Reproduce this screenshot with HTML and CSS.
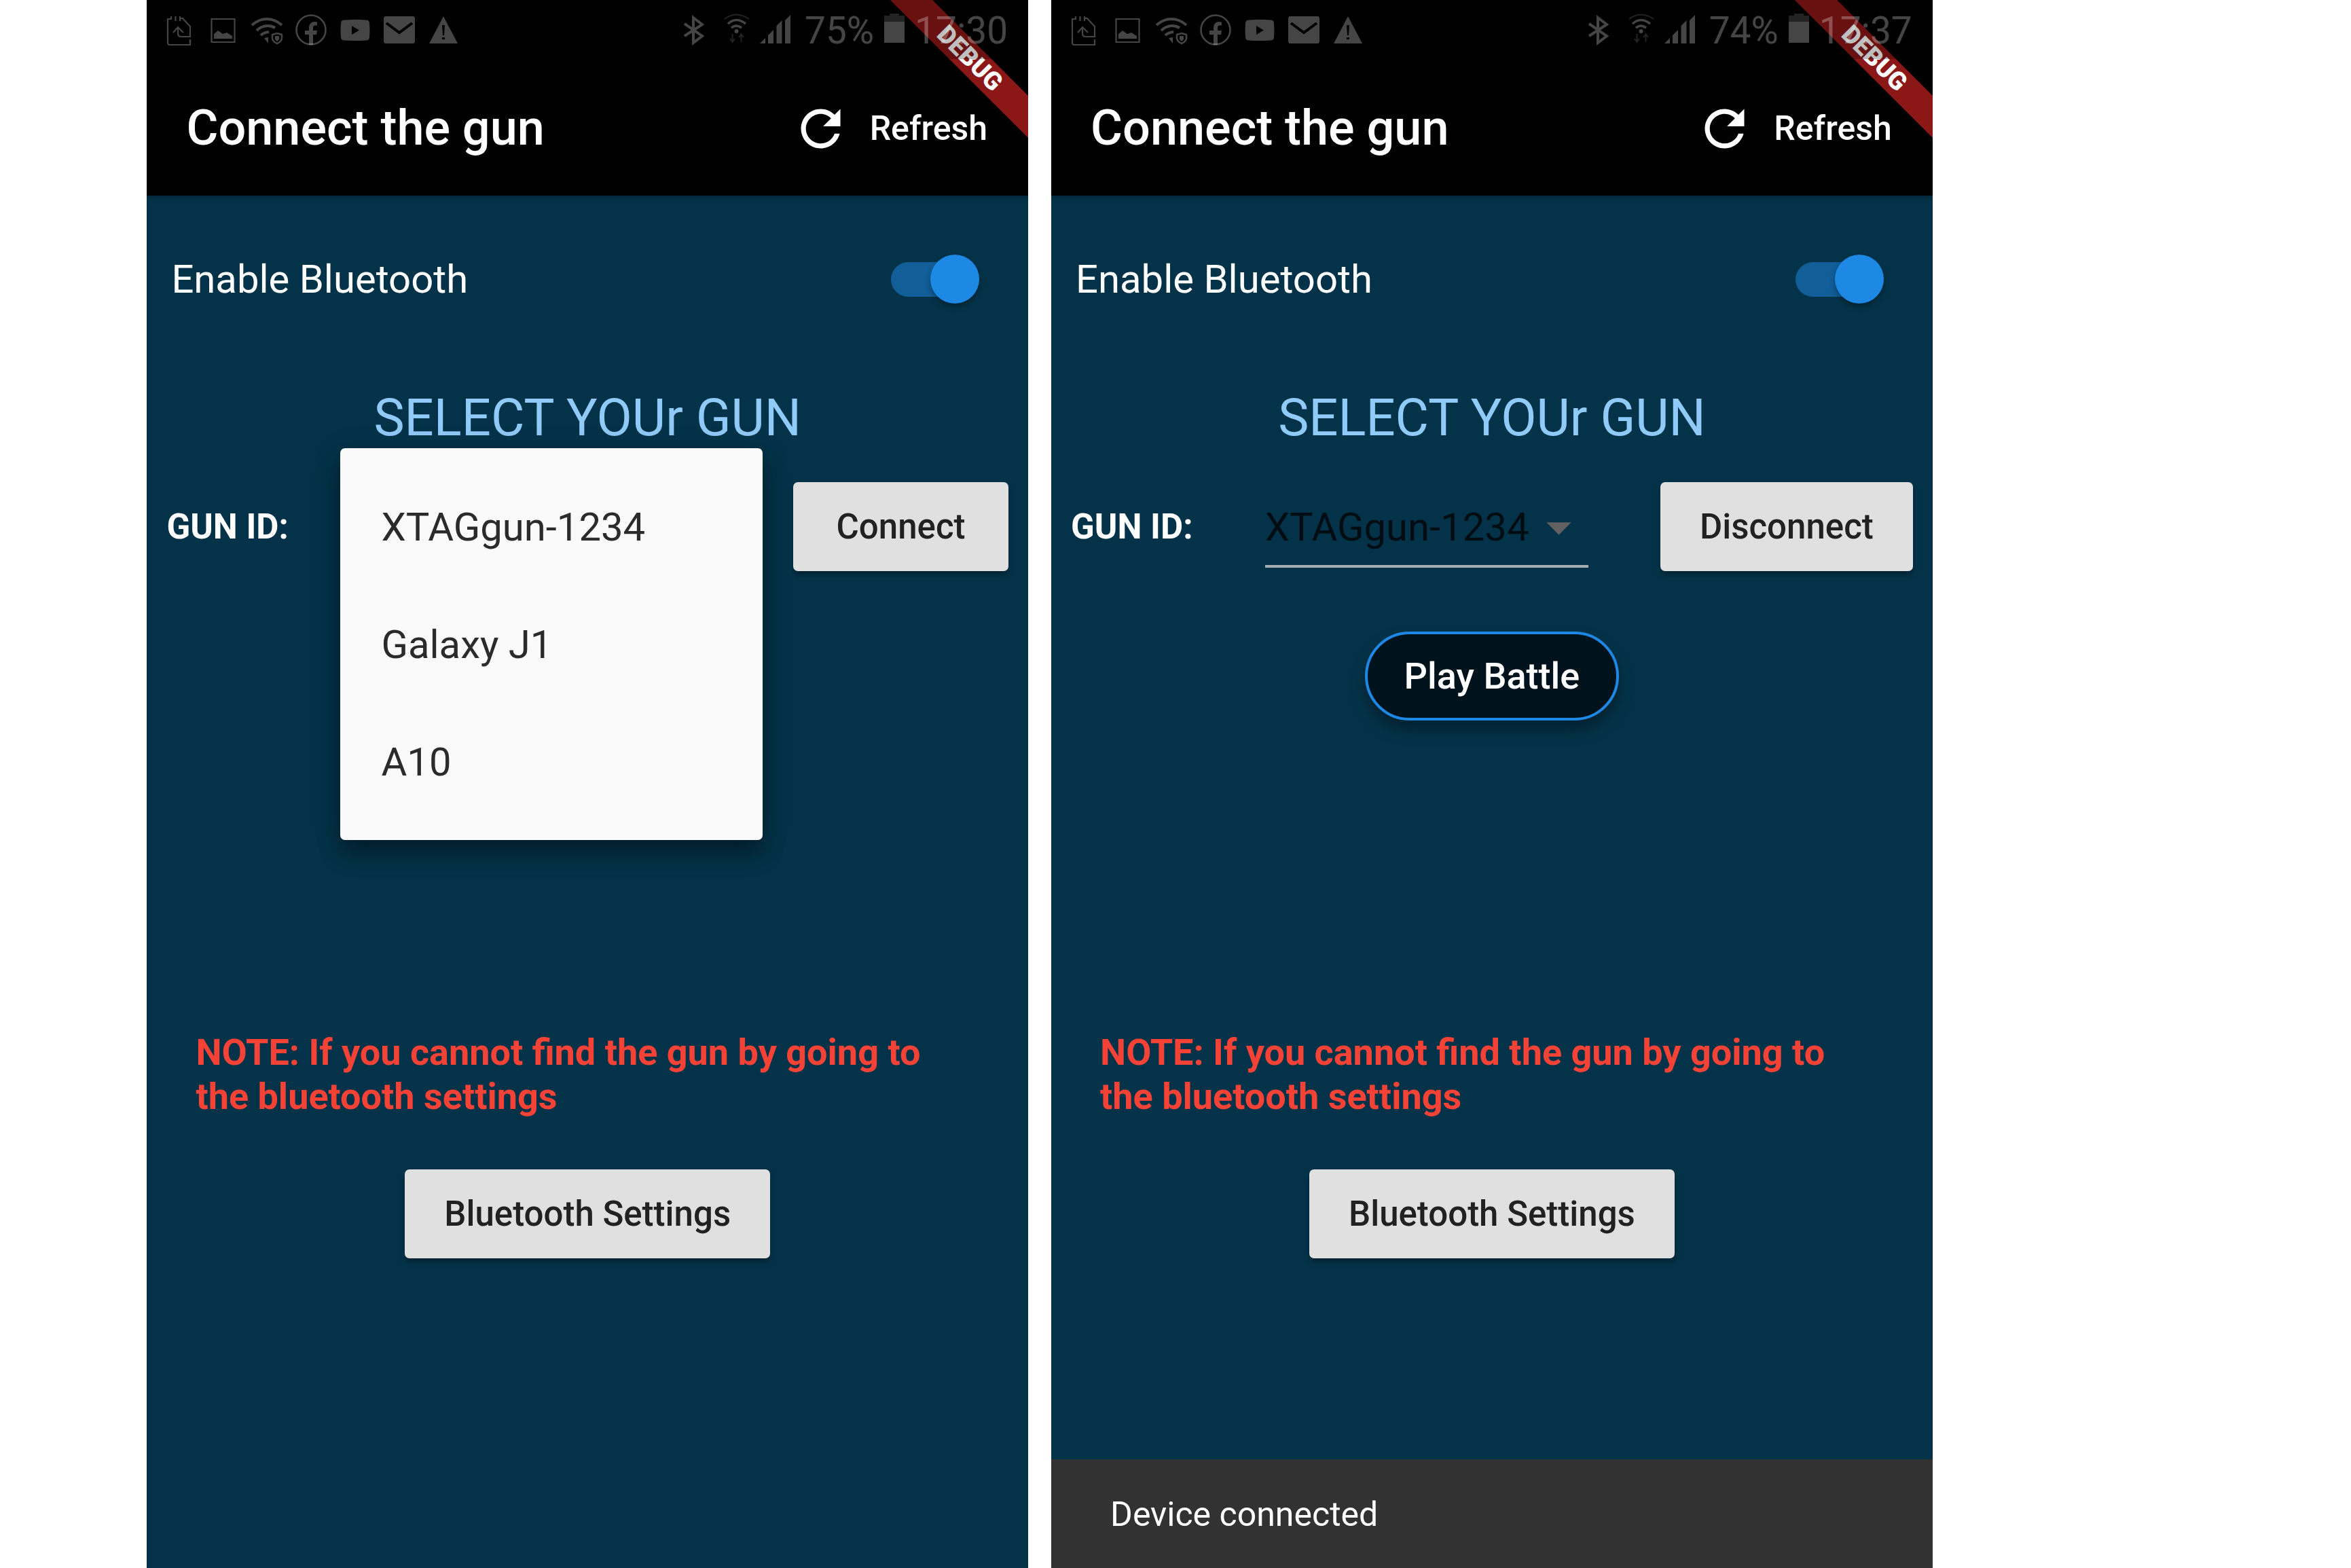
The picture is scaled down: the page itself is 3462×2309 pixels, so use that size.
FILE: index.html
```html
<!DOCTYPE html>
<html lang="en">
<head>
<meta charset="utf-8">
<meta name="viewport" content="width=device-width, initial-scale=1">
<title>Connect the gun</title>
<link rel="stylesheet" href="styles.css">
</head>
<body>
<svg class="sprite" aria-hidden="true">
  <symbol id="i-sync" viewBox="0 0 48 48"><path d="M13 4v4H8v35a3 3 0 0 0 3 3h30v-8M19.500 4v7M26 4v7M26 7h4l11 12v15H28q-5 0-5-5v-9M16 28l7-8 8 8" fill="none" stroke="currentColor" stroke-width="2.200"/></symbol>
  <symbol id="i-image" viewBox="0 0 48 48"><path d="M7.500 8h34v34h-34z" fill="none" stroke="currentColor" stroke-width="2.200"/><path d="M11 37v-7l6-5 7 5 6-2 8 5v4z" fill="currentColor"/></symbol>
  <symbol id="i-wifi-safe" viewBox="0 0 48 48"><g fill="none" stroke="currentColor" stroke-width="4"><path d="M2 17q10-9 22-9t22 9M9 25q7-7 16-7 6 0 11 3M15 32q4-4 12-5" /><path d="M39 29l7 2v5q0 5-7 8-7-3-7-8v-5z" stroke-width="2.500"/></g><path d="M20 36l6-1v9zM36 33h6v5l-3 3-3-3z" fill="currentColor"/></symbol>
  <symbol id="i-facebook" viewBox="0 0 48 48"><circle cx="24" cy="24" r="21.500" fill="none" stroke="currentColor" stroke-width="2.600"/><path d="M21 46V31h-6v-6h6v-4c0-6 4-9 8-9l4 .5v5h-3c-2 0-3 1-3 3V25h6l-1 6h-5v15z" fill="currentColor"/></symbol>
  <symbol id="i-video" viewBox="0 0 48 48"><path fill-rule="evenodd" d="M8 9.500Q24 8 40 9.500q5 0 5 5 1 10 0 20 0 5-5 5-16 1-32 0-5 0-5-5-1-10 0-20 0-5 5-5zM19 18v13l11-6.500z" fill="currentColor"/></symbol>
  <symbol id="i-mail" viewBox="0 0 48 48"><rect x="1" y="4" width="46" height="40" rx="3" fill="currentColor"/><path d="M5 14l19 14 19-14" fill="none" stroke="#000" stroke-width="4"/></symbol>
  <symbol id="i-warning" viewBox="0 0 48 48"><path fill-rule="evenodd" d="M24 4l21 40H3zM22 17l1 15h2l1-15zM22 35v3h4v-3z" fill="currentColor"/></symbol>
  <symbol id="i-bluetooth" viewBox="0 0 44 48"><path d="M1 15l26 18-13 10V6l13 10L1 33" fill="none" stroke="currentColor" stroke-width="4"/></symbol>
  <symbol id="i-wifi" viewBox="0 0 38 48"><g fill="none" stroke="currentColor"><path d="M1 8q17-13 36 0" stroke-width="2" opacity=".5"/><path d="M6 15q12-11 26 0M11 21q7-6 15 0" stroke-width="3.500"/><path d="M12.500 30v11M9 37l3.500 5 3.500-5M25.500 42V31M22 35l3.500-5 3.500 5" stroke-width="2" opacity=".5"/></g><circle cx="18.500" cy="26" r="3" fill="currentColor"/></symbol>
  <symbol id="i-signal" viewBox="0 0 46 48"><path d="M0 44l8-8v8zM12 32l8-8v20h-8zM24.500 18l8-8v34h-8zM37 10l8-8v42h-8z" fill="currentColor"/></symbol>
  <symbol id="i-battery" viewBox="0 0 30 48"><path d="M0 3h8V0h14v3h8v9H0z" fill="currentColor" opacity=".5"/><path d="M0 12h30v31H0z" fill="currentColor"/></symbol>
  <symbol id="i-refresh" viewBox="0 0 24 24"><path fill="currentColor" d="M17.650 6.350C16.200 4.900 14.210 4 12 4c-4.420 0-7.990 3.580-7.990 8s3.570 8 7.990 8c3.730 0 6.840-2.550 7.730-6h-2.080c-.82 2.330-3.040 4-5.650 4-3.310 0-6-2.690-6-6s2.690-6 6-6c1.660 0 3.140.69 4.220 1.780L13 11h7V4z"/></symbol>
  <symbol id="i-arrow" viewBox="0 0 24 24"><path fill="currentColor" d="M7 10l5 5 5-5z"/></symbol>
</svg>

<main class="board">
  <section class="phone">
    <header class="top">
      <div class="status">
        <div class="status-left">
          <svg class="icon"><use href="#i-sync"/></svg>
          <svg class="icon"><use href="#i-image"/></svg>
          <svg class="icon"><use href="#i-wifi-safe"/></svg>
          <svg class="icon"><use href="#i-facebook"/></svg>
          <svg class="icon"><use href="#i-video"/></svg>
          <svg class="icon"><use href="#i-mail"/></svg>
          <svg class="icon"><use href="#i-warning"/></svg>
        </div>
        <div class="status-right">
          <svg class="icon icon-bt"><use href="#i-bluetooth"/></svg>
          <svg class="icon icon-wifi"><use href="#i-wifi"/></svg>
          <svg class="icon icon-signal"><use href="#i-signal"/></svg>
          <span class="charge">75%</span>
          <svg class="icon icon-battery"><use href="#i-battery"/></svg>
          <time class="clock">17:30</time>
        </div>
      </div>
      <div class="appbar">
        <h1 class="title">Connect the gun</h1>
        <button class="refresh" type="button"><svg class="refresh-icon" aria-hidden="true"><use href="#i-refresh"/></svg>Refresh</button>
      </div>
      <div class="ribbon">DEBUG</div>
    </header>
    <div class="content">
      <div class="toggle-row">
        <label for="bt-1">Enable Bluetooth</label>
        <input class="switch" id="bt-1" type="checkbox" checked>
      </div>
      <h2 class="heading">SELECT YOUr GUN</h2>
      <div class="gun-row">
        <label class="gun-label" for="gun-1">GUN ID:</label>
        <div class="field">
          <div class="menu">
            <select class="menu-list" id="gun-1" size="3">
              <option class="menu-item">XTAGgun-1234</option>
              <option class="menu-item">Galaxy J1</option>
              <option class="menu-item">A10</option>
            </select>
          </div>
        </div>
        <button class="button" type="button">Connect</button>
      </div>
      <div class="actions"></div>
      <p class="note">NOTE: If you cannot find the gun by going to the bluetooth settings</p>
      <button class="button settings" type="button">Bluetooth Settings</button>
    </div>
  </section>

  <section class="phone">
    <header class="top">
      <div class="status">
        <div class="status-left">
          <svg class="icon"><use href="#i-sync"/></svg>
          <svg class="icon"><use href="#i-image"/></svg>
          <svg class="icon"><use href="#i-wifi-safe"/></svg>
          <svg class="icon"><use href="#i-facebook"/></svg>
          <svg class="icon"><use href="#i-video"/></svg>
          <svg class="icon"><use href="#i-mail"/></svg>
          <svg class="icon"><use href="#i-warning"/></svg>
        </div>
        <div class="status-right">
          <svg class="icon icon-bt"><use href="#i-bluetooth"/></svg>
          <svg class="icon icon-wifi"><use href="#i-wifi"/></svg>
          <svg class="icon icon-signal"><use href="#i-signal"/></svg>
          <span class="charge">74%</span>
          <svg class="icon icon-battery"><use href="#i-battery"/></svg>
          <time class="clock">17:37</time>
        </div>
      </div>
      <div class="appbar">
        <h1 class="title">Connect the gun</h1>
        <button class="refresh" type="button"><svg class="refresh-icon" aria-hidden="true"><use href="#i-refresh"/></svg>Refresh</button>
      </div>
      <div class="ribbon">DEBUG</div>
    </header>
    <div class="content">
      <div class="toggle-row">
        <label for="bt-2">Enable Bluetooth</label>
        <input class="switch" id="bt-2" type="checkbox" checked>
      </div>
      <h2 class="heading">SELECT YOUr GUN</h2>
      <div class="gun-row">
        <label class="gun-label" for="gun-2">GUN ID:</label>
        <div class="field">
          <select class="dropdown" id="gun-2">
            <option>XTAGgun-1234</option>
            <option>Galaxy J1</option>
            <option>A10</option>
          </select>
          <svg class="arrow" aria-hidden="true"><use href="#i-arrow"/></svg>
        </div>
        <button class="button" type="button">Disconnect</button>
      </div>
      <div class="actions">
        <button class="play" type="button">Play Battle</button>
      </div>
      <p class="note">NOTE: If you cannot find the gun by going to the bluetooth settings</p>
      <button class="button settings" type="button">Bluetooth Settings</button>
    </div>
    <div class="snackbar" role="status">Device connected</div>
  </section>
</main>
</body>
</html>
```
FILE: styles.css
```css
* {
  box-sizing: border-box;
}

body {
  margin: 0;
  background: #fff;
  font-family: Roboto, "Noto Sans", sans-serif;
  font-size: 58px;
  line-height: 72px;
  color: #fff;
}

button,
select {
  font: inherit;
}

.sprite {
  display: none;
}

.board {
  display: grid;
  grid-template-columns: repeat(2, minmax(0, 1fr));
  gap: 34px;
  min-height: 100vh;
  padding-left: 6.25%;
  padding-right: 17.8%;
}

.phone {
  display: flex;
  flex-direction: column;
  background: #043349;
}

/* Status bar, app bar and corner ribbon */
.top {
  position: relative;
  overflow: hidden;
  background: #000;
}

.status {
  position: relative;
  z-index: 2;
  display: flex;
  justify-content: space-between;
  align-items: center;
  height: 87px;
  padding: 0 30px 0 23px;
  background: rgba(0, 0, 0, 0.25);
  color: rgba(255, 255, 255, 0.27);
  font-size: 55px;
}

.status-left {
  display: flex;
  gap: 17px;
}

.status-right {
  display: flex;
  align-items: center;
  gap: 15px;
}

.icon {
  width: 48px;
  height: 48px;
}

.icon-bt {
  width: 44px;
}

.icon-wifi {
  width: 38px;
}

.icon-signal {
  width: 46px;
}

.icon-battery {
  width: 30px;
}

.charge,
.clock {
  padding-top: 3px;
}

.charge {
  padding-left: 5px;
}

.appbar {
  display: flex;
  justify-content: space-between;
  align-items: center;
  height: 201px;
  padding: 3px 60px 0 58px;
}

.title {
  margin: 0;
  font-size: 72px;
  font-weight: 500;
}

.refresh {
  display: flex;
  align-items: center;
  gap: 29px;
  padding: 0;
  border: 0;
  background: none;
  color: #fff;
  font-size: 50px;
  font-weight: 500;
}

.refresh-icon {
  width: 87px;
  height: 87px;
}

.ribbon {
  position: absolute;
  top: 64px;
  right: -114px;
  z-index: 1;
  width: 400px;
  background: #8c1717;
  font-size: 37px;
  font-weight: 900;
  line-height: 44px;
  text-align: center;
  transform: rotate(45deg);
}

/* Page body */
.content {
  display: flex;
  flex: 1;
  flex-direction: column;
  padding: 87px 29px 0;
  box-shadow: inset 0 8px 8px -6px rgba(0, 0, 0, 0.3);
}

.toggle-row {
  display: flex;
  justify-content: space-between;
  align-items: center;
  padding: 0 43px 0 7px;
}

.switch {
  position: relative;
  width: 130px;
  height: 72px;
  margin: 0;
  appearance: none;
}

.switch::before {
  content: "";
  position: absolute;
  top: 11px;
  left: 0;
  width: 119px;
  height: 51px;
  border-radius: 26px;
  background: #115e98;
}

.switch::after {
  content: "";
  position: absolute;
  top: 0;
  right: 0;
  width: 72px;
  height: 72px;
  border-radius: 50%;
  background: #1e88e5;
  box-shadow: 0 5px 9px rgba(0, 0, 0, 0.3);
}

.heading {
  margin: 126px 0 53px;
  color: #90caf9;
  font-size: 76px;
  font-weight: 400;
  line-height: 84px;
  text-align: center;
}

.gun-row {
  display: flex;
  justify-content: space-between;
  align-items: center;
}

.gun-label {
  font-size: 51px;
  font-weight: 700;
}

.field {
  position: relative;
  width: 476px;
  height: 120px;
}

.dropdown {
  width: 100%;
  height: 100%;
  padding: 0;
  border: 0 solid transparent;
  border-width: 4px 0;
  border-bottom-color: #a3acb0;
  appearance: none;
  background: none;
  color: #010d13;
}

.arrow {
  position: absolute;
  top: 17px;
  right: 0;
  width: 87px;
  height: 87px;
  color: #616161;
  pointer-events: none;
}

.menu {
  position: absolute;
  top: -56px;
  left: -57px;
  z-index: 3;
  width: 622px;
  padding: 29px 0;
  border-radius: 7px;
  background: #fafafa;
  box-shadow: 0 22px 32px rgba(0, 0, 0, 0.32), 0 6px 40px rgba(0, 0, 0, 0.2);
}

.menu-list {
  display: block;
  width: 100%;
  height: 519px;
  padding: 0;
  border: 0;
  background: none;
  color: #2b2b2b;
  overflow: hidden;
}

.menu-item {
  min-height: 173px;
  padding: 53px 60px 48px;
  color: #2b2b2b;
  line-height: 72px;
}

.button {
  height: 131px;
  min-width: 317px;
  padding: 0 58px;
  border: 0;
  border-radius: 7px;
  background: #e0e0e0;
  box-shadow: 0 6px 9px rgba(0, 0, 0, 0.3);
  color: #212121;
  font-size: 51px;
  font-weight: 500;
}

.actions {
  display: flex;
  justify-content: center;
  align-items: flex-start;
  min-height: 676px;
  padding-top: 89px;
}

.play {
  height: 131px;
  padding: 0 54px;
  border: 4px solid #1e88e5;
  border-radius: 66px;
  background: #00121b;
  box-shadow: 0 14px 22px rgba(0, 0, 0, 0.35);
  color: #fff;
  font-size: 54px;
  font-weight: 500;
}

.note {
  margin: 0 43px 75px;
  color: #f44336;
  font-size: 54px;
  font-weight: 700;
  line-height: 65px;
}

.settings {
  align-self: center;
}

.snackbar {
  padding: 45px 87px 43px;
  background: #323232;
  font-size: 50px;
}
```
